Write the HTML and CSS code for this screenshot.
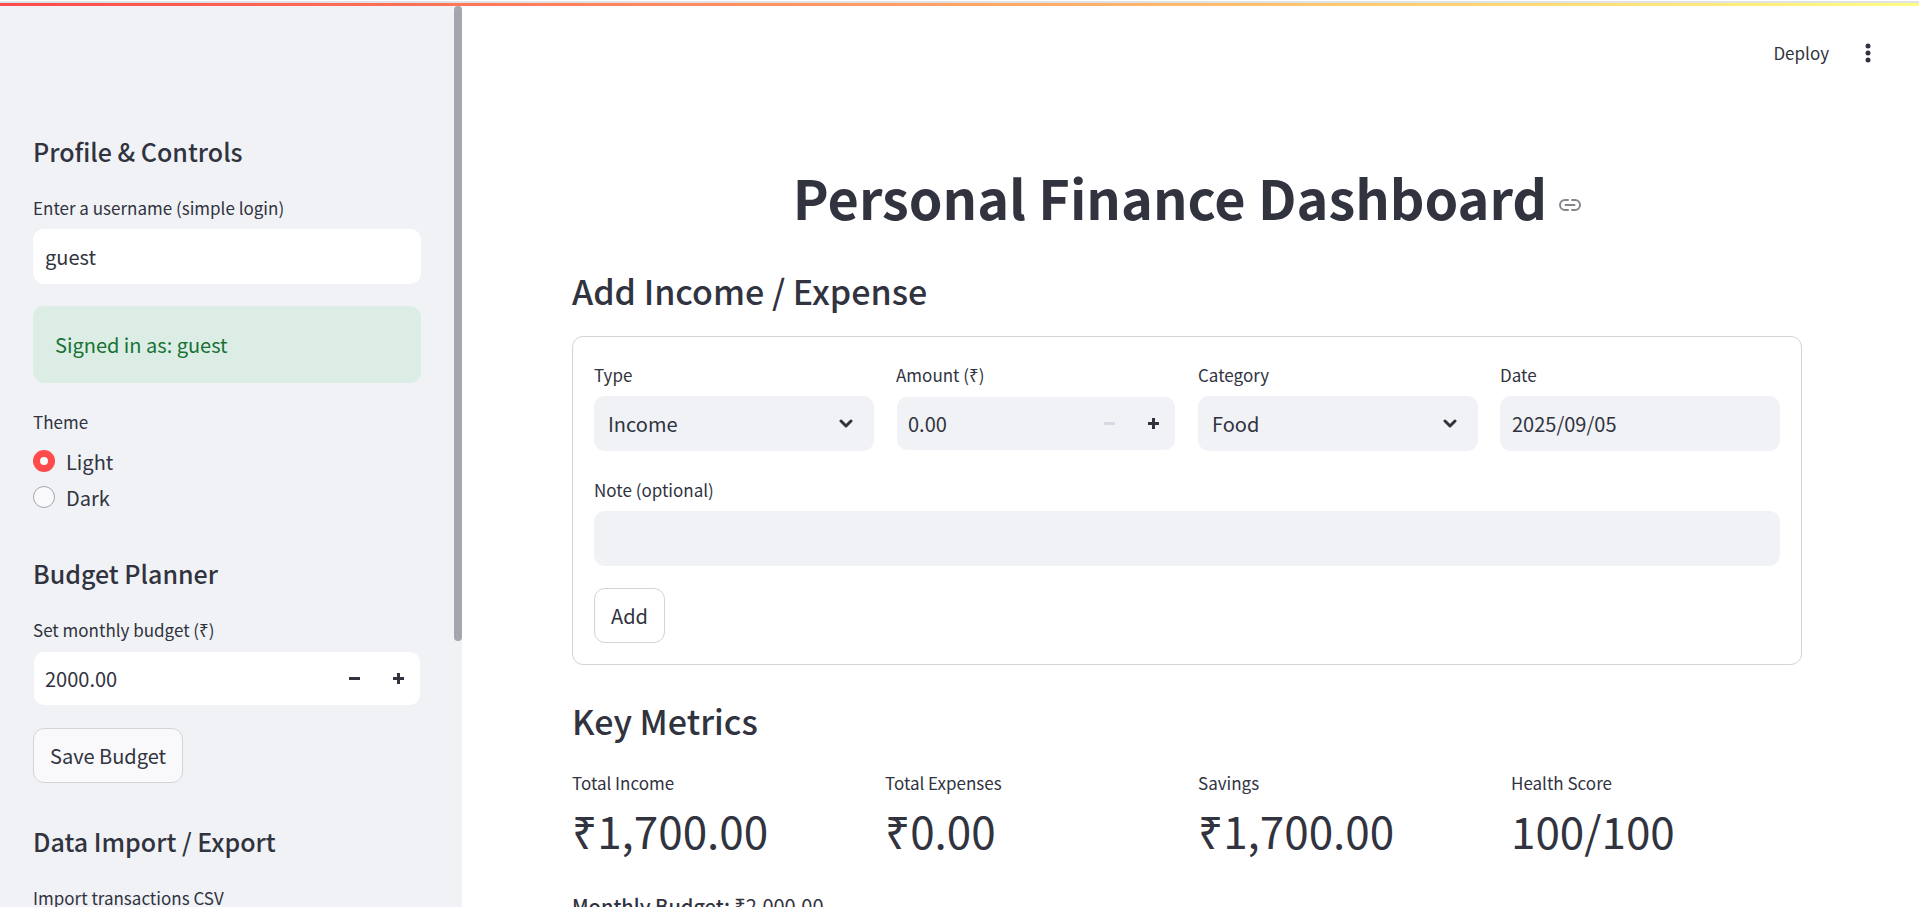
FILE: index.html
```html
<!DOCTYPE html>
<html lang="en">
<head>
    <meta charset="UTF-8">
    <meta name="viewport" content="width=device-width, initial-scale=1.0">
    <title>Personal Finance Dashboard</title>
    <link rel="stylesheet" href="styles.css">
</head>
<body>
    <div class="decoration"></div>
    <div class="app">
        <aside class="sidebar">
            <div class="sidebar-content">
                <h3>Profile &amp; Controls</h3>
                <div class="field">
                    <label for="username">Enter a username (simple login)</label>
                    <input type="text" id="username" class="control" value="guest">
                </div>
                <div class="alert">Signed in as: guest</div>
                <fieldset class="field">
                    <legend>Theme</legend>
                    <label class="radio"><input type="radio" name="theme" checked>Light</label>
                    <label class="radio"><input type="radio" name="theme">Dark</label>
                </fieldset>

                <h3>Budget Planner</h3>
                <div class="field">
                    <label for="budget">Set monthly budget (₹)</label>
                    <div class="control number">
                        <input type="number" id="budget" value="2000.00" step="0.01">
                        <button type="button" aria-label="Decrease budget">
                            <svg width="12" height="12" viewBox="0 0 12 12"><path d="M1 4h11v3H1z"/></svg>
                        </button>
                        <button type="button" aria-label="Increase budget">
                            <svg width="12" height="12" viewBox="0 0 12 12"><path d="M1 4h4V0h3v4h4v3H8v4H5V7H1z"/></svg>
                        </button>
                    </div>
                </div>
                <button type="button" class="btn">Save Budget</button>

                <h3>Data Import / Export</h3>
                <div class="field">
                    <label for="csv">Import transactions CSV</label>
                    <input type="file" id="csv" accept=".csv">
                </div>
            </div>
            <div class="scrollbar"><div class="thumb"></div></div>
        </aside>

        <main class="main">
            <header class="toolbar">
                <button type="button">Deploy</button>
                <button type="button" class="menu" aria-label="Main menu">
                    <svg width="6" height="20" viewBox="0 0 6 20"><circle cx="3" cy="3" r="2.5"/><circle cx="3" cy="10" r="2.5"/><circle cx="3" cy="17" r="2.5"/></svg>
                </button>
            </header>

            <h1>Personal Finance Dashboard
                <a href="#" aria-label="Link to heading">
                    <svg width="22" height="12" viewBox="0 0 22 12"><path d="M9 1H6a5 5 0 0 0 0 10h3M13 1h3a5 5 0 0 1 0 10h-3M6.5 6h9"/></svg>
                </a>
            </h1>

            <h2>Add Income / Expense</h2>
            <form class="entry">
                <div class="columns">
                    <div class="field">
                        <label for="type">Type</label>
                        <div class="select">
                            <select id="type" class="control">
                                <option>Income</option>
                                <option>Expense</option>
                            </select>
                            <svg width="14" height="10" viewBox="0 0 14 10"><path d="M2 2l5 5 5-5"/></svg>
                        </div>
                    </div>
                    <div class="field">
                        <label for="amount">Amount (₹)</label>
                        <div class="control number">
                            <input type="number" id="amount" value="0.00" min="0" step="0.01">
                            <button type="button" aria-label="Decrease amount" disabled>
                                <svg width="12" height="12" viewBox="0 0 12 12"><path d="M1 4h11v3H1z"/></svg>
                            </button>
                            <button type="button" aria-label="Increase amount">
                                <svg width="12" height="12" viewBox="0 0 12 12"><path d="M1 4h4V0h3v4h4v3H8v4H5V7H1z"/></svg>
                            </button>
                        </div>
                    </div>
                    <div class="field">
                        <label for="category">Category</label>
                        <div class="select">
                            <select id="category" class="control">
                                <option>Food</option>
                            </select>
                            <svg width="14" height="10" viewBox="0 0 14 10"><path d="M2 2l5 5 5-5"/></svg>
                        </div>
                    </div>
                    <div class="field">
                        <label for="date">Date</label>
                        <input type="text" id="date" class="control" value="2025/09/05">
                    </div>
                </div>
                <div class="field">
                    <label for="note">Note (optional)</label>
                    <input type="text" id="note" class="control">
                </div>
                <button type="button" class="btn">Add</button>
            </form>

            <h2>Key Metrics</h2>
            <div class="columns">
                <div class="metric">
                    <div class="metric-label">Total Income</div>
                    <div class="metric-value">₹1,700.00</div>
                </div>
                <div class="metric">
                    <div class="metric-label">Total Expenses</div>
                    <div class="metric-value">₹0.00</div>
                </div>
                <div class="metric">
                    <div class="metric-label">Savings</div>
                    <div class="metric-value">₹1,700.00</div>
                </div>
                <div class="metric">
                    <div class="metric-label">Health Score</div>
                    <div class="metric-value">100/100</div>
                </div>
            </div>
            <p class="summary"><strong>Monthly Budget:</strong> ₹2,000.00</p>
        </main>
    </div>
</body>
</html>
```
FILE: styles.css
```css
* {
    box-sizing: border-box;
}
body {
    margin: 0;
    height: 100vh;
    display: flex;
    flex-direction: column;
    overflow: hidden;
    font-family: "Noto Sans CJK SC", "Noto Sans", sans-serif;
    font-size: 20px;
    line-height: 33px;
    color: #31333f;
    background-color: white;
}
h1, h2, h3, p {
    margin: 0;
}
button, input, select {
    font: inherit;
    color: inherit;
}
button {
    border: none;
    background: none;
    padding: 0;
    cursor: pointer;
}
svg {
    display: block;
    fill: currentColor;
}
.decoration {
    flex: none;
    height: 6px;
    border-top: 1px solid white;
    background: linear-gradient(#dfe3e6, #dfe3e6) top / 100% 2px no-repeat,
        linear-gradient(90deg, #ff4b4b, #fffd80);
}
.app {
    flex: 1;
    min-height: 0;
    display: flex;
}

/* Sidebar */
.sidebar {
    flex: none;
    width: 462px;
    display: flex;
    background-color: #f0f2f6;
}
.sidebar-content {
    flex: 1;
    display: flex;
    flex-direction: column;
    align-items: stretch;
    gap: 22px;
    padding: 129px 33px 0;
    overflow: hidden;
}
.sidebar-content > * {
    flex: none;
}
.sidebar-content .btn {
    align-self: flex-start;
}
.scrollbar {
    width: 8px;
}
.thumb {
    height: 70.5%;
    border-radius: 4px;
    background-color: #a5a6ad;
}
h3 {
    margin-bottom: 2px;
    font-size: 25px;
    font-weight: 500;
    line-height: 32px;
}
.field + h3, .btn + h3 {
    margin-top: 20px;
}
.alert {
    padding: 22px;
    border-radius: 11px;
    color: #177233;
    background-color: #dcede6;
}

/* Form controls */
.field {
    display: flex;
    flex-direction: column;
    gap: 5px;
    min-width: 0;
    margin: 0;
    padding: 0;
    border: none;
}
.field label, .field legend, .metric-label {
    padding: 0;
    font-size: 17px;
}
fieldset.field {
    display: block;
}
.field legend {
    margin-bottom: 5px;
}
.control {
    display: block;
    width: 100%;
    height: 55px;
    padding: 0 12px;
    border: none;
    border-radius: 11px;
    background-color: #f0f2f6;
}
.sidebar .control {
    background-color: white;
}
.number {
    display: flex;
    padding: 0;
    border: 1px solid transparent;
    background-clip: padding-box;
}
.number input {
    flex: 1;
    min-width: 0;
    padding: 0 11px;
    border: none;
    background: none;
    appearance: textfield;
}
.number input::-webkit-inner-spin-button {
    display: none;
}
.number button {
    width: 44px;
    display: grid;
    place-items: center;
}
.number button:disabled {
    color: #d5dae5;
}
.select {
    position: relative;
}
.select select {
    appearance: none;
    padding: 0 14px;
}
.select svg {
    position: absolute;
    top: 23px;
    right: 21px;
    fill: none;
    stroke: #31333f;
    stroke-width: 3;
    stroke-linecap: round;
    stroke-linejoin: round;
    pointer-events: none;
}
.field .radio {
    display: flex;
    align-items: center;
    gap: 11px;
    height: 36px;
    font-size: 20px;
}
.radio input {
    appearance: none;
    width: 22px;
    height: 22px;
    margin: 0;
    border: 1px solid #a5a6ad;
    border-radius: 50%;
    background-color: #f9f9fb;
}
.radio input:checked {
    border: 7px solid #ff4b4b;
}
.btn {
    height: 55px;
    padding: 0 16px;
    border: 1px solid #d3d4d9;
    border-radius: 11px;
    background-color: white;
}
.sidebar .btn {
    background-color: #f9f9fb;
}

/* Main column */
.main {
    flex: 1;
    min-width: 0;
    padding: 0 117px 0 110px;
    overflow: hidden;
}
.toolbar {
    display: flex;
    justify-content: flex-end;
    align-items: center;
    gap: 36px;
    height: 93px;
    margin-right: -69px;
    font-size: 17px;
}
h1 {
    display: flex;
    justify-content: center;
    align-items: center;
    gap: 12px;
    margin-top: 60px;
    font-size: 54px;
    font-weight: 700;
    line-height: 76px;
}
h1 a {
    padding-top: 16px;
}
h1 svg {
    fill: none;
    stroke: #85878f;
    stroke-width: 2;
    stroke-linecap: round;
}
h2 {
    margin: 33px 0 22px;
    font-size: 34px;
    font-weight: 500;
    line-height: 46px;
}
.entry {
    display: flex;
    flex-direction: column;
    align-items: stretch;
    gap: 22px;
    padding: 21px;
    border: 1px solid #d3d4d9;
    border-radius: 11px;
}
.entry .btn {
    align-self: flex-start;
}
.columns {
    display: grid;
    grid-template-columns: repeat(4, minmax(0, 1fr));
    gap: 22px;
}
.metric-value {
    font-size: 44px;
    line-height: 62px;
}
.summary {
    margin-top: 28px;
}
.summary strong {
    font-weight: 500;
}
```
